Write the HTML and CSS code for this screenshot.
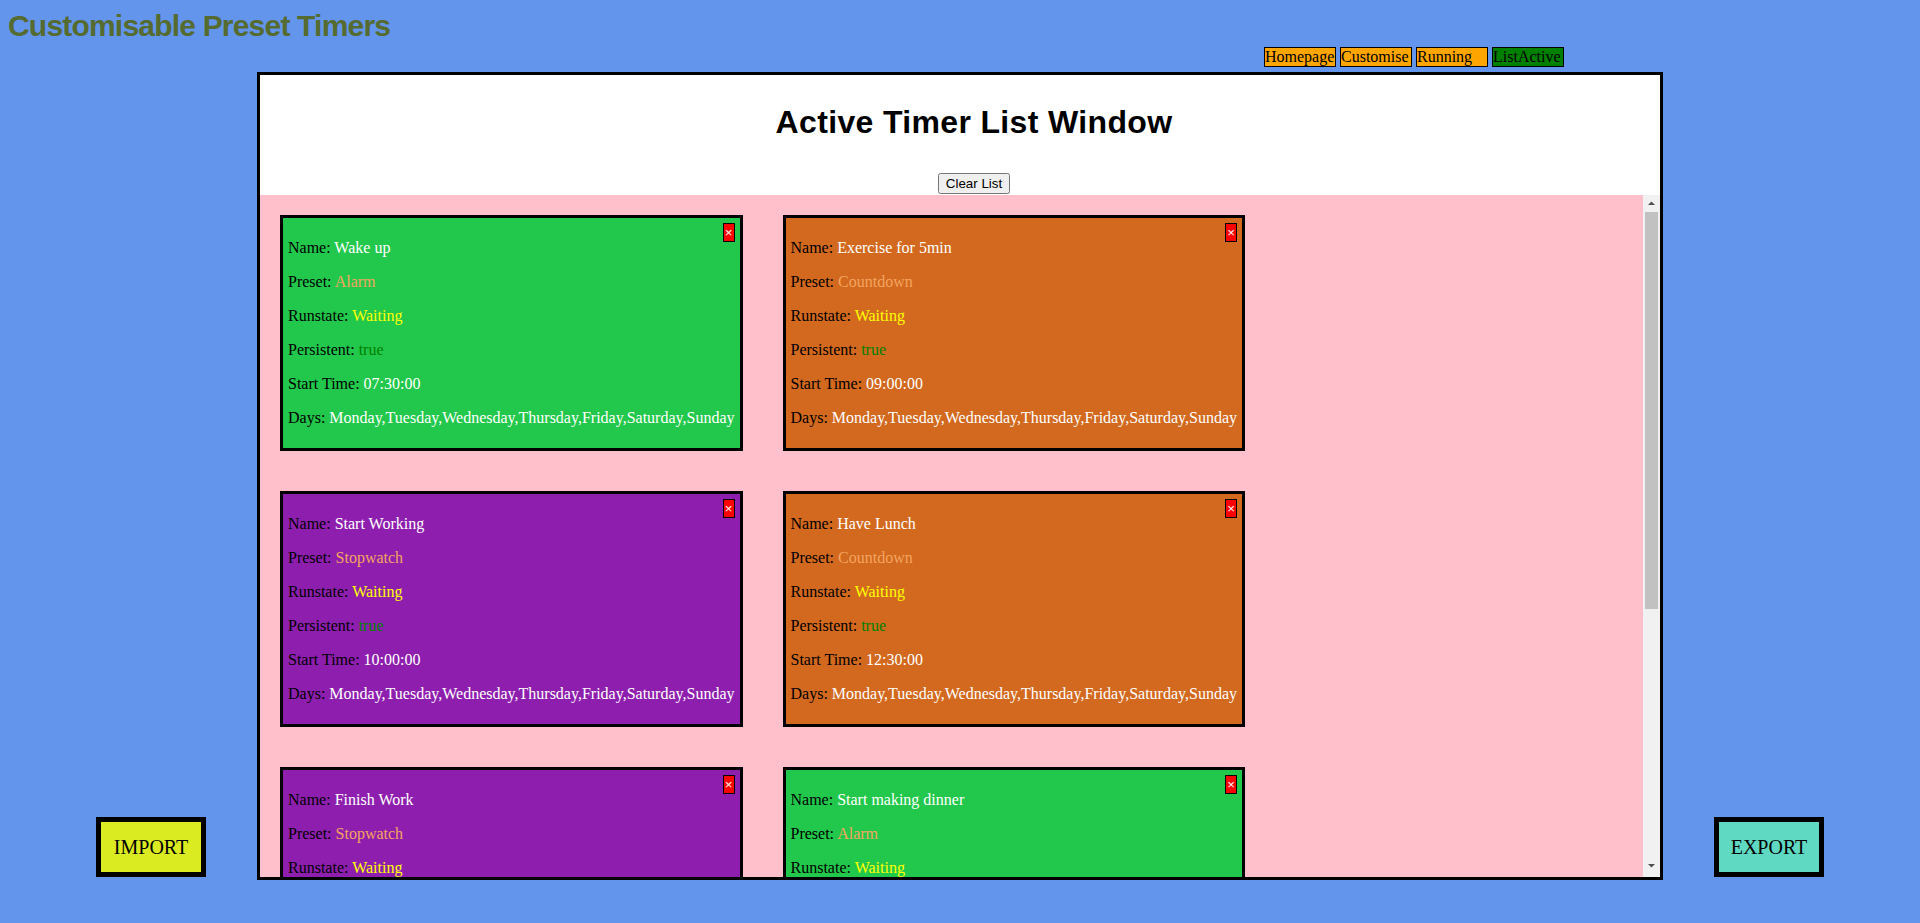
FILE: index.html
```html
<!DOCTYPE html>
<html lang="en">
<head>
<meta charset="utf-8">
<title>Customisable Preset Timers</title>
<link rel="stylesheet" href="styles.css">
</head>
<body>
<h1 class="site-title">Customisable Preset Timers</h1>
<nav class="nav">
  <button class="nav-btn">Homepage</button>
  <button class="nav-btn">Customise</button>
  <button class="nav-btn">Running</button>
  <button class="nav-btn nav-active">ListActive</button>
</nav>
<main class="stage">
  <button class="io-btn import">IMPORT</button>
  <section class="window">
    <header class="window-head">
      <h2 class="window-title">Active Timer List Window</h2>
      <button class="clear-btn">Clear List</button>
    </header>
    <div class="list-area">
      <div class="list">
        <div class="card green">
          <button class="close">×</button>
          <p>Name: <span class="v-name">Wake up</span></p>
          <p>Preset: <span class="v-preset">Alarm</span></p>
          <p>Runstate: <span class="v-run">Waiting</span></p>
          <p>Persistent: <span class="v-pers">true</span></p>
          <p>Start Time: <span class="v-time">07:30:00</span></p>
          <p>Days: <span class="v-days">Monday,Tuesday,Wednesday,Thursday,Friday,Saturday,Sunday</span></p>
        </div>
        <div class="card orange">
          <button class="close">×</button>
          <p>Name: <span class="v-name">Exercise for 5min</span></p>
          <p>Preset: <span class="v-preset">Countdown</span></p>
          <p>Runstate: <span class="v-run">Waiting</span></p>
          <p>Persistent: <span class="v-pers">true</span></p>
          <p>Start Time: <span class="v-time">09:00:00</span></p>
          <p>Days: <span class="v-days">Monday,Tuesday,Wednesday,Thursday,Friday,Saturday,Sunday</span></p>
        </div>
        <div class="card purple">
          <button class="close">×</button>
          <p>Name: <span class="v-name">Start Working</span></p>
          <p>Preset: <span class="v-preset">Stopwatch</span></p>
          <p>Runstate: <span class="v-run">Waiting</span></p>
          <p>Persistent: <span class="v-pers">true</span></p>
          <p>Start Time: <span class="v-time">10:00:00</span></p>
          <p>Days: <span class="v-days">Monday,Tuesday,Wednesday,Thursday,Friday,Saturday,Sunday</span></p>
        </div>
        <div class="card orange">
          <button class="close">×</button>
          <p>Name: <span class="v-name">Have Lunch</span></p>
          <p>Preset: <span class="v-preset">Countdown</span></p>
          <p>Runstate: <span class="v-run">Waiting</span></p>
          <p>Persistent: <span class="v-pers">true</span></p>
          <p>Start Time: <span class="v-time">12:30:00</span></p>
          <p>Days: <span class="v-days">Monday,Tuesday,Wednesday,Thursday,Friday,Saturday,Sunday</span></p>
        </div>
        <div class="card purple">
          <button class="close">×</button>
          <p>Name: <span class="v-name">Finish Work</span></p>
          <p>Preset: <span class="v-preset">Stopwatch</span></p>
          <p>Runstate: <span class="v-run">Waiting</span></p>
          <p>Persistent: <span class="v-pers">true</span></p>
          <p>Start Time: <span class="v-time">17:00:00</span></p>
          <p>Days: <span class="v-days">Monday,Tuesday,Wednesday,Thursday,Friday,Saturday,Sunday</span></p>
        </div>
        <div class="card green">
          <button class="close">×</button>
          <p>Name: <span class="v-name">Start making dinner</span></p>
          <p>Preset: <span class="v-preset">Alarm</span></p>
          <p>Runstate: <span class="v-run">Waiting</span></p>
          <p>Persistent: <span class="v-pers">true</span></p>
          <p>Start Time: <span class="v-time">18:00:00</span></p>
          <p>Days: <span class="v-days">Monday,Tuesday,Wednesday,Thursday,Friday,Saturday,Sunday</span></p>
        </div>
        <div class="card orange">
          <button class="close">×</button>
          <p>Name: <span class="v-name">Cook pasta</span></p>
          <p>Preset: <span class="v-preset">Countdown</span></p>
          <p>Runstate: <span class="v-run">Waiting</span></p>
          <p>Persistent: <span class="v-pers">true</span></p>
          <p>Start Time: <span class="v-time">18:30:00</span></p>
          <p>Days: <span class="v-days">Monday,Tuesday,Wednesday,Thursday,Friday,Saturday,Sunday</span></p>
        </div>
        <div class="card green">
          <button class="close">×</button>
          <p>Name: <span class="v-name">Go to bed</span></p>
          <p>Preset: <span class="v-preset">Alarm</span></p>
          <p>Runstate: <span class="v-run">Waiting</span></p>
          <p>Persistent: <span class="v-pers">true</span></p>
          <p>Start Time: <span class="v-time">22:30:00</span></p>
          <p>Days: <span class="v-days">Monday,Tuesday,Wednesday,Thursday,Friday,Saturday,Sunday</span></p>
        </div>
      </div>
      <div class="scrollbar" aria-hidden="true">
        <div class="sb-btn">
          <svg width="17" height="17" viewBox="0 0 17 17"><polygon points="5,10 8.5,6.5 12,10" fill="#505050"/></svg>
        </div>
        <div class="sb-track"><div class="sb-thumb"></div></div>
        <div class="sb-btn">
          <svg width="17" height="17" viewBox="0 0 17 17"><polygon points="5,4 12,4 8.5,7.5" fill="#505050"/></svg>
        </div>
      </div>
    </div>
  </section>
  <button class="io-btn export">EXPORT</button>
</main>
</body>
</html>
```

FILE: styles.css
```css
body {
  margin: 8px;
  background: #6495ed;
  font-family: "Liberation Serif", "Times New Roman", serif;
}

.site-title {
  margin: 0;
  font: bold 30px/35px "Liberation Sans", Arial, sans-serif;
  letter-spacing: -0.8px;
  color: #556b2f;
}

.nav {
  display: flex;
  gap: 4px;
  margin-top: 4px;
  padding-left: 1256px;
}

.nav-btn {
  width: 72px;
  height: 20px;
  box-sizing: border-box;
  padding: 0;
  border: 1px solid #000;
  background: #ffa500;
  color: #000;
  font: 16px/18px "Liberation Serif", "Times New Roman", serif;
  text-align: left;
}

.nav-active {
  background: #008000;
}

.stage {
  display: flex;
  justify-content: space-between;
  align-items: flex-end;
  margin-top: 5px;
  padding: 0 88px;
}

.io-btn {
  width: 110px;
  height: 60px;
  box-sizing: border-box;
  margin-bottom: 3px;
  padding: 0;
  border: 5px solid #000;
  color: #000;
  font: 20px "Liberation Serif", "Times New Roman", serif;
}

.import {
  background: #dbeb22;
}

.export {
  background: #5fd9c2;
}

.window {
  width: 1400px;
  height: 802px;
  border: 3px solid #000;
  background: #fff;
  display: flex;
  flex-direction: column;
}

.window-head {
  padding: 29px 0 1px 28px;
  text-align: center;
}

.window-title {
  margin: 0 0 32px;
  font: bold 32px/37px "Liberation Sans", Arial, sans-serif;
  letter-spacing: 0.35px;
  color: #000;
}

.clear-btn {
  display: block;
  margin: 0 auto;
  font: 13.333px "Liberation Sans", Arial, sans-serif;
}

.list-area {
  flex: 1;
  min-height: 0;
  display: flex;
}

.list {
  flex: 1;
  min-width: 0;
  overflow-y: auto;
  scrollbar-width: none;
  background: #ffc0cb;
  display: flex;
  flex-wrap: wrap;
  align-content: flex-start;
}

.scrollbar {
  width: 17px;
  flex: none;
  display: flex;
  flex-direction: column;
  background: #f1f1f1;
}

.sb-btn {
  height: 17px;
  flex: none;
}

.sb-btn svg {
  display: block;
}

.sb-track {
  flex: 1;
}

.sb-thumb {
  height: 397px;
  margin: 0 2px;
  background: #c1c1c1;
}

.card {
  margin: 20px;
  padding: 5px;
  border: 3px solid #000;
  color: #000;
}

.card p {
  margin: 16px 0;
  font-size: 16px;
  line-height: 18px;
}

.close {
  float: right;
  padding: 1px;
  border: 1px solid #000;
  background: #ff0000;
  color: #fff;
  font: 13.333px "Liberation Sans", Arial, sans-serif;
}

.green { background: #22c84b; }
.orange { background: #d2691e; }
.purple { background: #8e1fae; }

.v-name, .v-time, .v-days { color: #fff; }
.v-preset { color: #f4a460; }
.v-run { color: #ffff00; }
.v-pers { color: #008000; }
```
